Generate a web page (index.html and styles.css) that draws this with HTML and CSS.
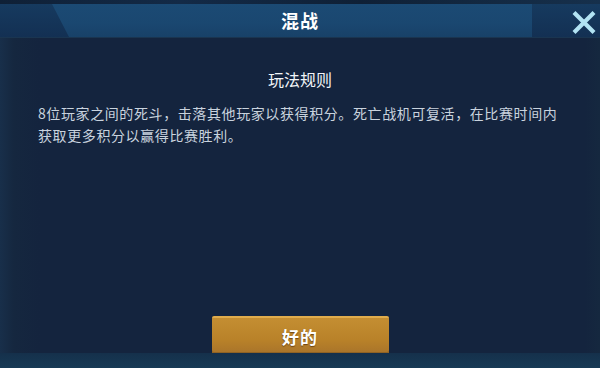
FILE: index.html
```html
<!DOCTYPE html>
<html lang="zh-CN">
<head>
    <meta charset="UTF-8">
    <title>混战</title>
    <link rel="stylesheet" href="styles.css">
</head>
<body>
<div class="dialog">
    <div class="top-strip"></div>
    <header class="dialog-head">
        <span></span>
        <h1 class="dialog-title">混战</h1>
        <button class="close-btn" aria-label="关闭">
            <svg width="24" height="25" viewBox="0 0 24 25">
                <path d="M2 2.5 L22 22.5 M22 2.5 L2 22.5" stroke="#b2e3f3" stroke-width="4.2" stroke-linecap="butt" fill="none"/>
            </svg>
        </button>
    </header>

    <main class="dialog-body">
        <h2 class="rules-title">玩法规则</h2>
        <p class="rules-text">8位玩家之间的死斗，击落其他玩家以获得积分。死亡战机可复活，在比赛时间内获取更多积分以赢得比赛胜利。</p>
    </main>

    <div class="dialog-foot">
        <button class="ok-btn">好的</button>
    </div>
    <div class="bottom-strip"></div>
</div>
</body>
</html>
```

FILE: styles.css
```css
body {
    margin: 0;
    background-color: #14243e;
    font-family: "Noto Sans CJK SC", "Noto Sans", sans-serif;
}

.dialog {
    width: 600px;
    height: 368px;
    display: flex;
    flex-direction: column;
    background: linear-gradient(90deg, #182f4a 0px, #15273f 14px, #14243e 40px, #14243e 585px, #15283f 600px);
    overflow: hidden;
}

.top-strip {
    height: 4px;
    background: linear-gradient(90deg, #0f2036, #132a47 30%, #0f2036 60%, #16304c);
}

/* Header */
.dialog-head {
    position: relative;
    height: 33px;
    display: grid;
    grid-template-columns: 1fr auto 1fr;
    align-items: center;
    background: linear-gradient(180deg, #163a5f, #133053);
    border-bottom: 1px solid #1a3550;
}
.dialog-head::before {
    content: "";
    position: absolute;
    left: 52px;
    right: 68px;
    top: 0;
    bottom: 0;
    clip-path: polygon(0 0, 100% 0, 100% 100%, 17px 100%);
    background: linear-gradient(180deg, #1b4a74 0%, #1a4770 60%, #184168 100%);
}
.dialog-title {
    position: relative;
    margin: 0;
    font-size: 18px;
    font-weight: bold;
    color: #ffffff;
    letter-spacing: 1px;
    line-height: 33px;
}
.close-btn {
    justify-self: end;
    margin-right: 4px;
    margin-top: 4px;
    padding: 0;
    border: none;
    background: none;
    display: flex;
    position: relative;
}

/* Body */
.dialog-body {
    flex: 1;
    padding: 30px 38px 0;
}
.rules-title {
    margin: 0 0 12px;
    text-align: center;
    font-size: 16px;
    font-weight: normal;
    line-height: 22px;
    color: #f2f5f8;
}
.rules-text {
    margin: 0;
    font-size: 14px;
    letter-spacing: 0.6px;
    line-height: 22px;
    color: #c9d3de;
}

/* Footer */
.dialog-foot {
    display: flex;
    justify-content: center;
    padding-bottom: 0;
}
.ok-btn {
    width: 177px;
    height: 38px;
    border: none;
    border-top: 2px solid #e0ac4c;
    border-radius: 2px;
    background: linear-gradient(180deg, #c48e32 0%, #b98229 60%, #a8732a 100%);
    box-shadow: 0 1px 0 #0d1a2c, inset 0 -2px 0 #8f6224;
    color: #ffffff;
    font-family: "Noto Sans CJK SC", sans-serif;
    font-size: 17px;
    font-weight: bold;
    letter-spacing: 1px;
    text-shadow: 0 1px 1px rgba(60, 30, 0, 0.6);
}

.bottom-strip {
    height: 15px;
    margin-top: -1px;
    background: linear-gradient(180deg, #15304b, #173a55);
}
```
